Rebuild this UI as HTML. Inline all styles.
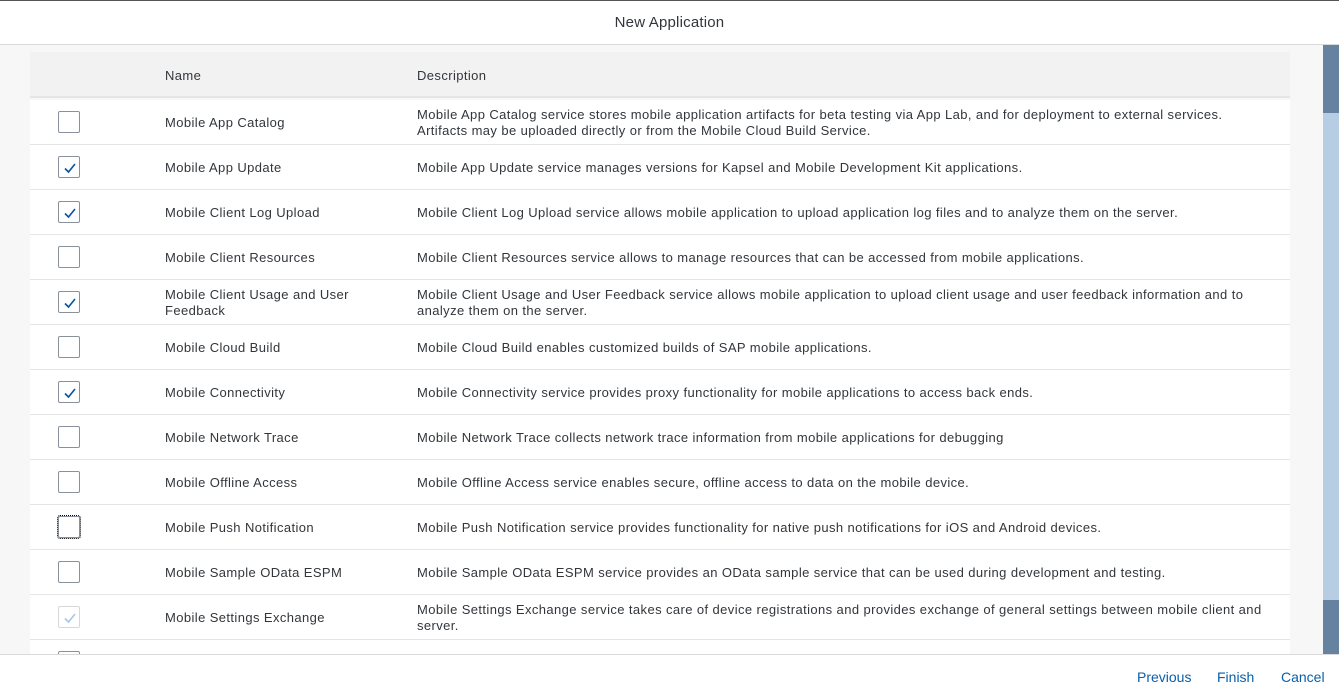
<!DOCTYPE html>
<html><head><meta charset="utf-8"><style>
*{margin:0;padding:0;box-sizing:border-box}
body{width:1339px;height:697px;overflow:hidden;background:#fff;font-family:"Liberation Sans",sans-serif;color:#32363a;font-size:13px;position:relative}
.top{position:absolute;left:0;top:0;width:1339px;height:45px;border-top:1px solid #555;border-bottom:1px solid #d9d9d9;background:#fff;text-align:center;line-height:44px;font-size:15px;letter-spacing:0.2px}
.content{position:absolute;left:0;top:45px;width:1323px;height:609px;background:#f7f7f7;overflow:hidden;letter-spacing:0.4px}
.sb{position:absolute;left:1323px;top:45px;width:16px;height:609px;background:#b7cde3}
.sb .a{position:absolute;left:0;top:0;width:16px;height:68px;background:#6583a0}
.sb .b{position:absolute;left:0;top:555px;width:16px;height:54px;background:#6583a0}
.hdr{position:absolute;left:30px;top:7px;width:1260px;height:46px;background:#f2f2f2;border-bottom:2px solid #e5e5e5}
.hdr span{position:absolute;top:16px}
.row{position:absolute;left:30px;width:1260px;height:45px;background:#fff;border-bottom:1px solid #e5e5e5}
.cb{position:absolute;left:28px;top:11px;width:22px;height:22px;border:1px solid #89919a;border-radius:2px;background:#fff}
.cb.dis{border-color:#d5d7da}
.cb.foc{outline:1px dotted #000;outline-offset:0}
.cb svg{position:absolute;left:3px;top:3px}
.nm{position:absolute;left:135px;top:1px;width:220px;height:44px;display:flex;align-items:center;line-height:16px}
.ds{position:absolute;left:387px;top:1px;width:880px;height:44px;display:flex;align-items:center;line-height:16px}
.foot{position:absolute;left:0;top:654px;width:1339px;height:43px;border-top:1px solid #d9d9d9;background:#fff}
.foot span{position:absolute;top:14px;color:#0a5fa8;font-size:14px}
</style></head><body>
<div class="top">New Application</div>
<div class="content">
<div class="hdr"><span style="left:135px">Name</span><span style="left:387px">Description</span></div>
<div class="row" style="top:55px"><div class="cb"></div><div class="nm">Mobile App Catalog</div><div class="ds">Mobile App Catalog service stores mobile application artifacts for beta testing via App Lab, and for deployment to external services.<br>Artifacts may be uploaded directly or from the Mobile Cloud Build Service.</div></div>
<div class="row" style="top:100px"><div class="cb"><svg width="16" height="16" viewBox="0 0 16 16"><path d="M3 8.5 L6.5 12 L13 4" fill="none" stroke="#0854a0" stroke-width="1.6"/></svg></div><div class="nm">Mobile App Update</div><div class="ds">Mobile App Update service manages versions for Kapsel and Mobile Development Kit applications.</div></div>
<div class="row" style="top:145px"><div class="cb"><svg width="16" height="16" viewBox="0 0 16 16"><path d="M3 8.5 L6.5 12 L13 4" fill="none" stroke="#0854a0" stroke-width="1.6"/></svg></div><div class="nm">Mobile Client Log Upload</div><div class="ds">Mobile Client Log Upload service allows mobile application to upload application log files and to analyze them on the server.</div></div>
<div class="row" style="top:190px"><div class="cb"></div><div class="nm">Mobile Client Resources</div><div class="ds">Mobile Client Resources service allows to manage resources that can be accessed from mobile applications.</div></div>
<div class="row" style="top:235px"><div class="cb"><svg width="16" height="16" viewBox="0 0 16 16"><path d="M3 8.5 L6.5 12 L13 4" fill="none" stroke="#0854a0" stroke-width="1.6"/></svg></div><div class="nm">Mobile Client Usage and User<br>Feedback</div><div class="ds">Mobile Client Usage and User Feedback service allows mobile application to upload client usage and user feedback information and to<br>analyze them on the server.</div></div>
<div class="row" style="top:280px"><div class="cb"></div><div class="nm">Mobile Cloud Build</div><div class="ds">Mobile Cloud Build enables customized builds of SAP mobile applications.</div></div>
<div class="row" style="top:325px"><div class="cb"><svg width="16" height="16" viewBox="0 0 16 16"><path d="M3 8.5 L6.5 12 L13 4" fill="none" stroke="#0854a0" stroke-width="1.6"/></svg></div><div class="nm">Mobile Connectivity</div><div class="ds">Mobile Connectivity service provides proxy functionality for mobile applications to access back ends.</div></div>
<div class="row" style="top:370px"><div class="cb"></div><div class="nm">Mobile Network Trace</div><div class="ds">Mobile Network Trace collects network trace information from mobile applications for debugging</div></div>
<div class="row" style="top:415px"><div class="cb"></div><div class="nm">Mobile Offline Access</div><div class="ds">Mobile Offline Access service enables secure, offline access to data on the mobile device.</div></div>
<div class="row" style="top:460px"><div class="cb foc"></div><div class="nm">Mobile Push Notification</div><div class="ds">Mobile Push Notification service provides functionality for native push notifications for iOS and Android devices.</div></div>
<div class="row" style="top:505px"><div class="cb"></div><div class="nm">Mobile Sample OData ESPM</div><div class="ds">Mobile Sample OData ESPM service provides an OData sample service that can be used during development and testing.</div></div>
<div class="row" style="top:550px"><div class="cb dis"><svg width="16" height="16" viewBox="0 0 16 16"><path d="M3 8.5 L6.5 12 L13 4" fill="none" stroke="#a9c6e8" stroke-width="1.6"/></svg></div><div class="nm">Mobile Settings Exchange</div><div class="ds">Mobile Settings Exchange service takes care of device registrations and provides exchange of general settings between mobile client and<br>server.</div></div>
<div class="row" style="top:595px"><div class="cb"></div></div>
</div>
<div class="sb"><div class="a"></div><div class="b"></div></div>
<div class="foot"><span style="left:1137px">Previous</span><span style="left:1217px">Finish</span><span style="left:1281px">Cancel</span></div>
</body></html>
